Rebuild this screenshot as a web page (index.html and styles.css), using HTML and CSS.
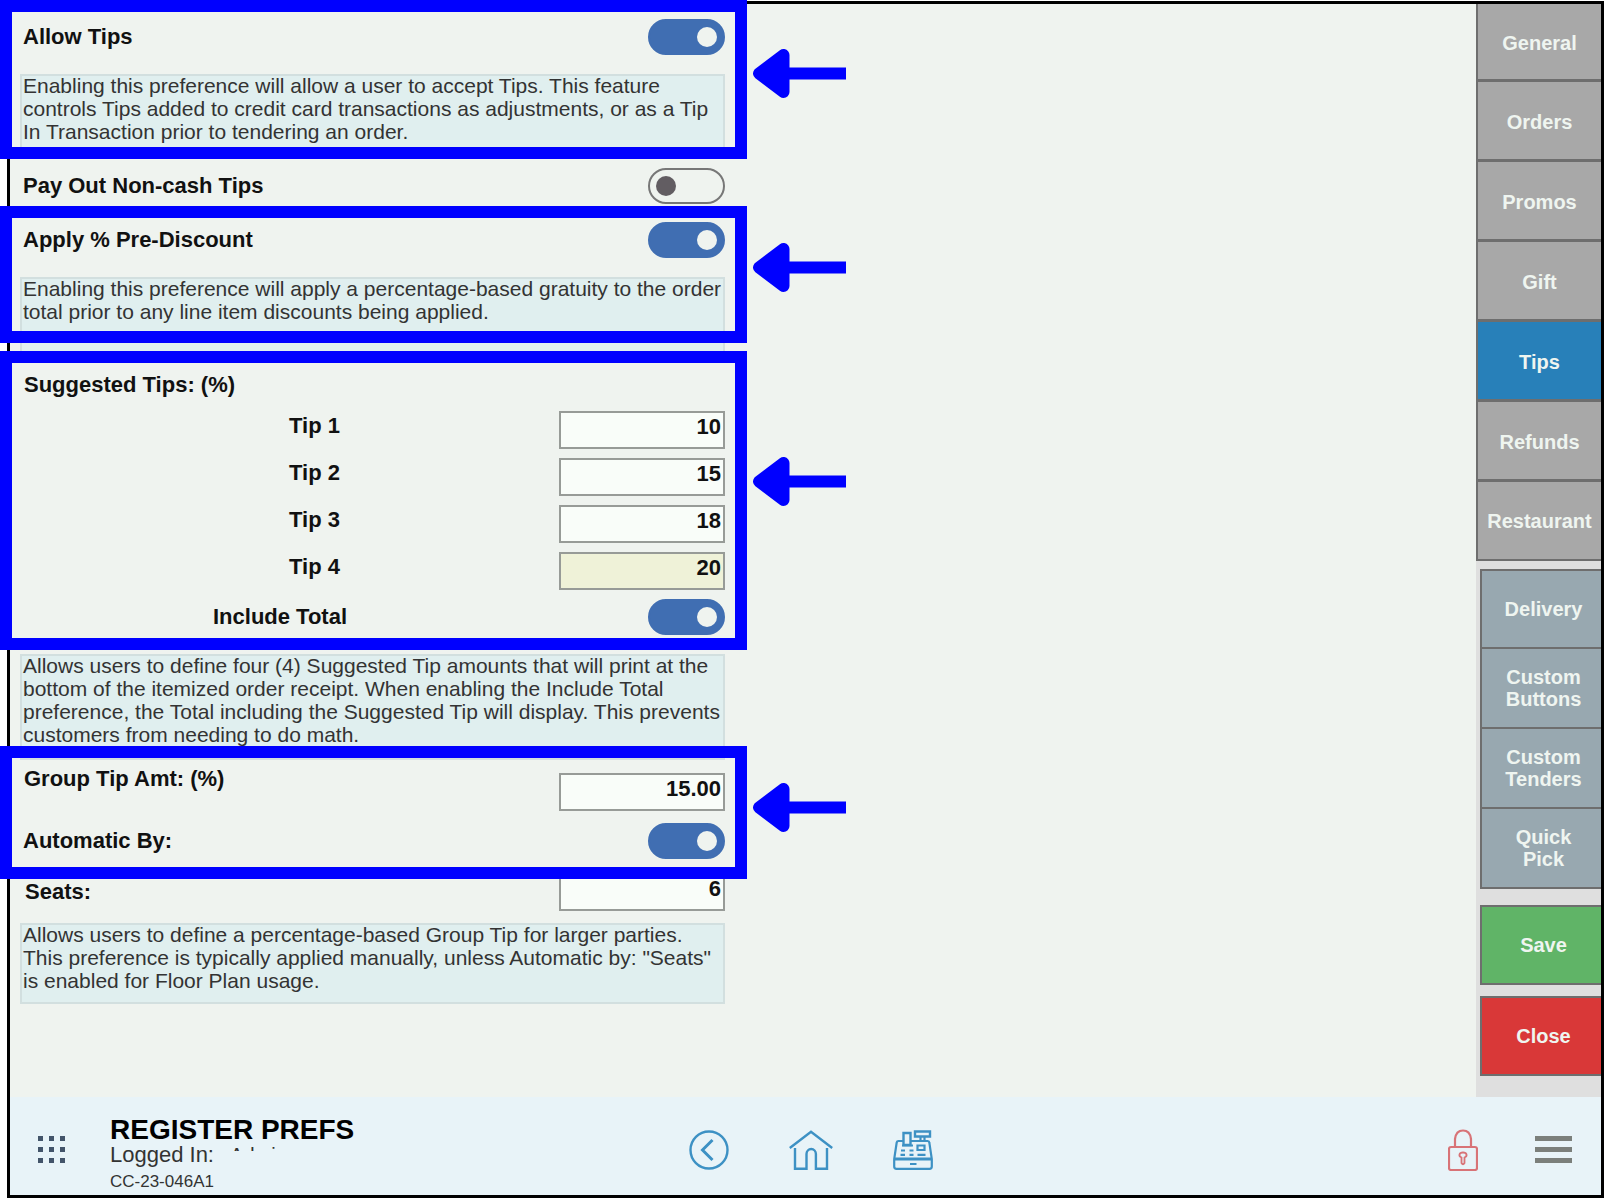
FILE: index.html
```html
<!DOCTYPE html>
<html lang="en">
<head>
  <meta charset="UTF-8">
  <meta name="viewport" content="width=device-width, initial-scale=1.0">
  <title>Register Prefs - Tips</title>
  <link rel="stylesheet" href="styles.css">
</head>
<body>

  <div class="frame">
    <div class="main">
      <form class="prefs">

        <section class="section">
          <div class="row">
            <label for="allowTips">Allow Tips</label>
            <input type="checkbox" class="toggle" id="allowTips" checked>
          </div>
          <p class="description">Enabling this preference will allow a user to accept Tips. This feature<br>controls Tips added to credit card transactions as adjustments, or as a Tip<br>In Transaction prior to tendering an order.</p>
          <div class="highlight highlight-allow">
            <svg class="arrow" viewBox="0 0 94 51"><path d="M7 25.5 31.5 7v37z"/><path d="M34 25.5h60"/></svg>
          </div>
        </section>

        <section class="section payout">
          <div class="row">
            <label for="payOut">Pay Out Non-cash Tips</label>
            <input type="checkbox" class="toggle" id="payOut">
          </div>
        </section>

        <section class="section discount">
          <div class="row">
            <label for="preDiscount">Apply % Pre-Discount</label>
            <input type="checkbox" class="toggle" id="preDiscount" checked>
          </div>
          <p class="description">Enabling this preference will apply a percentage-based gratuity to the order<br>total prior to any line item discounts being applied.</p>
          <div class="highlight highlight-discount">
            <svg class="arrow" viewBox="0 0 94 51"><path d="M7 25.5 31.5 7v37z"/><path d="M34 25.5h60"/></svg>
          </div>
        </section>

        <section class="section suggested">
          <h2>Suggested Tips: (%)</h2>
          <div class="tip-list">
            <div class="row tip"><label for="tip1">Tip 1</label><input type="text" class="field" id="tip1" value="10"></div>
            <div class="row tip"><label for="tip2">Tip 2</label><input type="text" class="field" id="tip2" value="15"></div>
            <div class="row tip"><label for="tip3">Tip 3</label><input type="text" class="field" id="tip3" value="18"></div>
            <div class="row tip"><label for="tip4">Tip 4</label><input type="text" class="field field-active" id="tip4" value="20"></div>
            <div class="row include">
              <label for="includeTotal">Include Total</label>
              <input type="checkbox" class="toggle" id="includeTotal" checked>
            </div>
          </div>
          <div class="highlight highlight-suggested">
            <svg class="arrow" viewBox="0 0 94 51"><path d="M7 25.5 31.5 7v37z"/><path d="M34 25.5h60"/></svg>
          </div>
        </section>
        <p class="description description-long">Allows users to define four (4) Suggested Tip amounts that will print at the<br>bottom of the itemized order receipt. When enabling the Include Total<br>preference, the Total including the Suggested Tip will display. This prevents<br>customers from needing to do math.</p>

        <section class="section group">
          <div class="row amount">
            <label for="groupTip">Group Tip Amt: (%)</label>
            <input type="text" class="field" id="groupTip" value="15.00">
          </div>
          <div class="row automatic">
            <label for="automaticBy">Automatic By:</label>
            <input type="checkbox" class="toggle" id="automaticBy" checked>
          </div>
          <div class="highlight highlight-group">
            <svg class="arrow" viewBox="0 0 94 51"><path d="M7 25.5 31.5 7v37z"/><path d="M34 25.5h60"/></svg>
          </div>
        </section>
        <div class="row seats">
          <label for="seats">Seats:</label>
          <input type="text" class="field" id="seats" value="6">
        </div>
        <p class="description description-group">Allows users to define a percentage-based Group Tip for larger parties.<br>This preference is typically applied manually, unless Automatic by: "Seats"<br>is enabled for Floor Plan usage.</p>
      </form>

      <aside class="sidebar">
        <nav class="tabs">
          <button type="button">General</button>
          <button type="button">Orders</button>
          <button type="button">Promos</button>
          <button type="button">Gift</button>
          <button type="button" class="active">Tips</button>
          <button type="button">Refunds</button>
          <button type="button">Restaurant</button>
        </nav>
        <div class="extras">
          <button type="button">Delivery</button>
          <button type="button">Custom<br>Buttons</button>
          <button type="button">Custom<br>Tenders</button>
          <button type="button">Quick<br>Pick</button>
        </div>
        <button type="button" class="action save">Save</button>
        <button type="button" class="action close">Close</button>
      </aside>
    </div>

    <footer class="footer">
      <div class="footer-left">
        <button type="button" class="icon-btn" aria-label="Apps">
          <svg width="28" height="28" viewBox="0 0 28 28" fill="#43546a">
            <path d="M0 0h5v5H0zM11 0h5v5h-5zM22 0h5v5h-5zM0 11h5v5H0zM11 11h5v5h-5zM22 11h5v5h-5zM0 22h5v5H0zM11 22h5v5h-5zM22 22h5v5h-5z"/>
          </svg>
        </button>
        <div class="station">
          <h1>REGISTER PREFS</h1>
          <div class="user">Logged In: <span class="user-name">Admin</span></div>
          <div class="station-id">CC-23-046A1</div>
        </div>
      </div>

      <div class="footer-center">
        <button type="button" class="icon-btn" aria-label="Back">
          <svg width="40" height="40" viewBox="0 0 40 40" fill="none" stroke="#3d91c4" stroke-width="2.4">
            <circle cx="20" cy="20" r="18.5"/>
            <path d="M23.5 10 13.5 20l10 10" stroke-width="3"/>
          </svg>
        </button>
        <button type="button" class="icon-btn" aria-label="Home">
          <svg width="44" height="40" viewBox="0 0 44 40" fill="none" stroke="#3d91c4" stroke-width="2.4">
            <path d="M.8 18 22 1.8 43.2 18"/>
            <path d="M6 18v20.7h11.5V24a4.7 5 0 0 1 9.4 0v14.7H38V18"/>
          </svg>
        </button>
        <button type="button" class="icon-btn" aria-label="Register">
          <svg width="40" height="40" viewBox="0 0 40 40" fill="none" stroke="#3d91c4" stroke-width="2.2">
            <path d="M10 11H5.5Q4 11 3.7 12.5L1.2 29v7.500Q1.200 38.800 3.500 38.800h33q2.300 0 2.300-2.300V29l-2.500-16.500Q36.200 11 34.700 11H18"/>
            <path d="M1 29h38" stroke-width="2.8"/>
            <path d="M10.5 3h7v12h-7zM22 1.5h15v5H22z" stroke-width="2.4"/>
            <path d="M27.5 7v4M31.5 7v4M9 15.5h11"/>
            <path d="M24.5 15.5h7V20h-7z"/>
            <path d="M8 20.5h4M16.5 20.500h4M7.500 24.800H12M16.500 24.800h4M24.500 24.800h8M17 34h6.500" stroke-width="2.2"/>
          </svg>
        </button>
      </div>

      <div class="footer-right">
        <button type="button" class="icon-btn" aria-label="Lock">
          <svg width="30" height="42" viewBox="0 0 30 42" fill="none" stroke="#d87377" stroke-width="2.2">
            <rect x="1" y="18" width="28" height="23" rx="2"/>
            <path d="M7 18v-8q1-8.500 8-8.500t8 8.500v8"/>
            <path d="M13.5 28.5q-2.500-1-2-3 .5-2 3.500-2t3.500 2q.5 2-2 3V34q-1.500 2.500-3 0z" stroke-width="1.800"/>
          </svg>
        </button>
        <button type="button" class="icon-btn" aria-label="Menu">
          <svg width="37" height="28" viewBox="0 0 37 28" fill="#7b7f7b"><path d="M0 0h37v5H0zM0 11h37v5H0zM0 22h37v5H0z"/></svg>
        </button>
      </div>
    </footer>
  </div>

</body>
</html>
```

FILE: styles.css
```css
* {
  box-sizing: border-box;
}

body {
  margin: 0;
  padding: 1px 2px 2px 7px;
  background-color: white;
  color: #111;
  font-family: "Liberation Sans", Arial, sans-serif;
  font-size: 22px;
}

h1,
h2,
p {
  margin: 0;
}

button,
input {
  font: inherit;
  margin: 0;
}

button {
  cursor: pointer;
}

.frame {
  display: flex;
  flex-direction: column;
  min-height: calc(100vh - 3px);
  border: 3px solid black;
  background-color: #eff3ef;
}

.main {
  display: flex;
  flex: 1;
  justify-content: space-between;
}

/* preferences */
.prefs {
  width: 725px;
  padding: 15px 10px 0;
}

.section {
  position: relative;
}

.row {
  display: flex;
  justify-content: space-between;
  align-items: center;
  padding-left: 3px;
}

.row label,
.section h2 {
  font-size: 22px;
  line-height: 24px;
  font-weight: bold;
}

.section h2 {
  padding-left: 4px;
}

.toggle {
  appearance: none;
  display: flex;
  align-items: center;
  width: 77px;
  height: 36px;
  padding: 0 6px;
  border: 2px solid #777;
  border-radius: 18px;
  cursor: pointer;
}

.toggle::before {
  content: "";
  width: 20px;
  height: 20px;
  border-radius: 50%;
  background-color: #625d62;
}

.toggle:checked {
  justify-content: flex-end;
  border-color: #406eb2;
  background-color: #406eb2;
}

.toggle:checked::before {
  background-color: #eff3ef;
}

.field {
  width: 166px;
  height: 38px;
  padding: 0 2px 6px;
  border: 2px solid #979b97;
  border-radius: 0;
  background-color: #f9fdf9;
  color: #111;
  font-weight: bold;
  text-align: right;
}

.field-active {
  background-color: #eff2d8;
}

.description {
  min-height: 81px;
  margin-top: 19px;
  padding: 0 3px;
  box-shadow: inset 0 0 0 2px #d2dfdf;
  background-color: #e0efef;
  color: #333;
  font-size: 21px;
  line-height: 23px;
  white-space: nowrap;
}

.description-long {
  min-height: 106px;
}

.description-group {
  margin-top: 12px;
}

.payout {
  margin-top: 13px;
}

.discount {
  margin-top: 18px;
}

.suggested {
  margin-top: 15px;
}

.tip-list {
  display: grid;
  gap: 9px;
  margin-top: 14px;
}

.tip {
  padding-left: 269px;
}

.tip label {
  padding-bottom: 8px;
}

.include {
  padding-left: 193px;
}

.group {
  margin-top: 7px;
}

.amount {
  align-items: flex-start;
  padding-left: 4px;
}

.amount .field {
  margin-top: 6px;
}

.automatic {
  margin-top: 12px;
}

.seats {
  margin-top: 14px;
  padding-left: 5px;
}

/* callouts drawn over the form */
.highlight {
  position: absolute;
  z-index: 1;
  left: -20px;
  right: -22px;
  border: 12px solid blue;
  pointer-events: none;
}

.highlight-allow {
  top: -19px;
  bottom: -4px;
}

.highlight-discount {
  top: -16px;
  bottom: 15px;
}

.highlight-suggested {
  top: -22px;
  bottom: -15px;
}

.highlight-group {
  top: -21px;
  bottom: -20px;
}

.arrow {
  position: absolute;
  top: 24px;
  left: calc(100% + 17px);
  width: 94px;
  height: 51px;
  fill: blue;
  stroke: blue;
  stroke-width: 12;
  stroke-linejoin: round;
}

.highlight-allow .arrow {
  top: 36px;
}

.highlight-suggested .arrow {
  top: 93px;
}

/* sidebar */
.sidebar {
  width: 125px;
  padding-bottom: 20px;
  background-color: #dfdfdf;
}

.sidebar button {
  display: block;
  width: 100%;
  height: 80px;
  padding: 0;
  border: 0 solid #6e6e6e;
  color: #eff5f0;
  font-size: 20px;
  line-height: 22px;
  font-weight: bold;
}

.tabs button {
  padding-top: 3px;
  border-width: 0 0 3px 2px;
  background-color: #a8a8a8;
}

.tabs button:first-child {
  height: 78px;
}

.tabs button:last-child {
  height: 79px;
  padding-top: 0;
  border-bottom-width: 2px;
}

.tabs .active {
  background-color: #2880b9;
}

.extras {
  margin: 8px 0 16px 4px;
  border-top: 2px solid #6e6e6e;
}

.extras button {
  padding-left: 4px;
  border-width: 0 0 2px 2px;
  background-color: #98a8b0;
}

.extras button:first-child {
  height: 78px;
}

.sidebar .action {
  width: auto;
  min-width: 121px;
  margin: 0 0 11px 4px;
  padding-left: 4px;
  border-width: 2px 0 2px 2px;
}

.sidebar .save {
  background-color: #60b467;
}

.sidebar .close {
  margin-bottom: 0;
  background-color: #d93838;
}

/* footer */
.footer {
  display: grid;
  grid-template-columns: 1fr auto 1fr;
  align-items: center;
  height: 98px;
  padding: 8px 29px 0 28px;
  background-color: #e8f3f8;
}

.footer-left,
.footer-center,
.footer-right {
  display: flex;
  align-items: center;
}

.footer-left {
  gap: 44px;
}

.footer-center {
  gap: 60px;
  padding-left: 11px;
}

.footer-right {
  justify-content: flex-end;
  gap: 57px;
}

.icon-btn {
  padding: 0;
  border: 0;
  background: none;
}

.icon-btn svg {
  display: block;
}

.station {
  padding-top: 10px;
}

.station h1 {
  color: black;
  font-size: 28px;
  line-height: 28px;
}

.user {
  color: #333;
  line-height: 22px;
}

/* only the top of the name is shown */
.user-name {
  display: inline-block;
  height: 7px;
  margin-left: 10px;
  overflow: hidden;
  vertical-align: top;
  font-size: 20px;
}

.station-id {
  padding-top: 4px;
  color: #333;
  font-size: 17px;
  line-height: 24px;
}
```
